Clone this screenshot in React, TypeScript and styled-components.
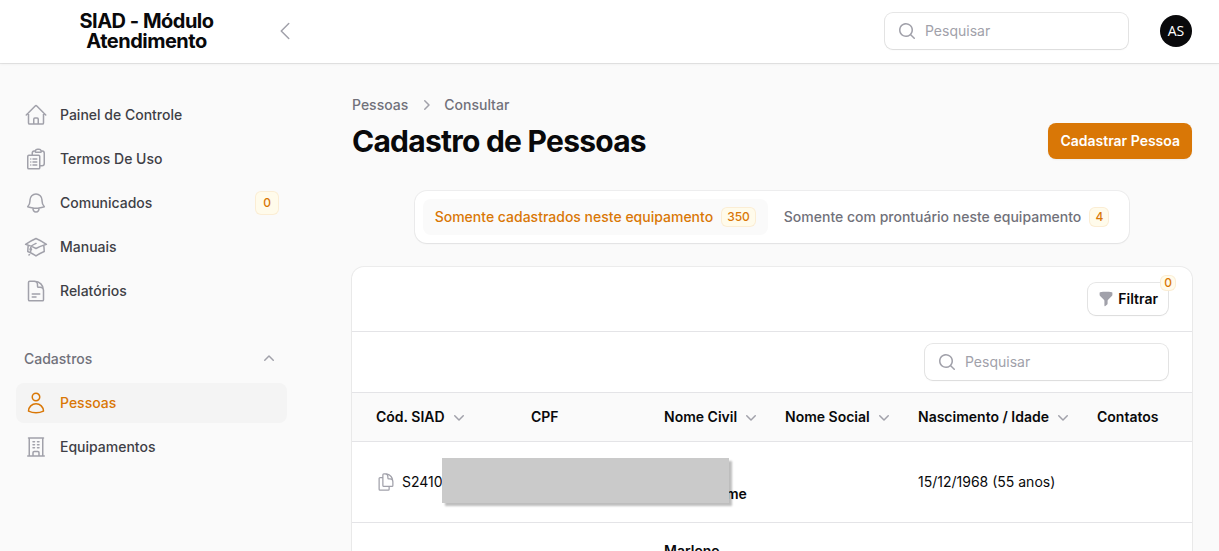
import React from "react";
import styled, { createGlobalStyle } from "styled-components";
import {
  HiMiniChevronDown,
  HiMiniChevronRight,
  HiMiniChevronUp,
  HiMiniFunnel,
  HiMiniMagnifyingGlass,
  HiOutlineAcademicCap,
  HiOutlineBell,
  HiOutlineBuildingOffice,
  HiOutlineChevronLeft,
  HiOutlineClipboardDocumentList,
  HiOutlineDocumentDuplicate,
  HiOutlineDocumentText,
  HiOutlineHome,
  HiOutlineUser,
} from "react-icons/hi2";
import type { IconType } from "react-icons";

const color = {
  text: "#09090b",
  body: "#3f3f46",
  muted: "#71717a",
  icon: "#a1a1aa",
  primary: "#d97706",
  primarySoft: "#fffbeb",
  page: "#fafafa",
  line: "#e4e4e7",
};

const GlobalStyle = createGlobalStyle`
  *, *::before, *::after { box-sizing: border-box; }
  html { scrollbar-width: none; }
  body {
    margin: 0;
    background: ${color.page};
    color: ${color.text};
    font-family: Inter, "Liberation Sans", sans-serif;
    font-size: 14px;
    line-height: 20px;
  }
  button, input { font: inherit; }
  button { border: 0; background: none; padding: 0; cursor: pointer; }
  a { text-decoration: none; color: inherit; }
  ul, ol { list-style: none; margin: 0; padding: 0; }
  svg { display: block; flex: none; }
`;

const Topbar = styled.header`
  display: flex;
  align-items: center;
  min-height: 63px;
  padding: 0 27px 1px 0;
  background: #fff;
  box-shadow: 0 0 0 1px rgba(9, 9, 11, 0.08), 0 1px 3px rgba(0, 0, 0, 0.06);
  position: relative;
`;

const BrandArea = styled.div`
  display: flex;
  align-items: center;
  gap: 4px;
  width: 297px;
  padding-left: 24px;
`;

const Brand = styled.a`
  flex: 1;
  padding: 0 48px;
  font-size: 20px;
  line-height: 20px;
  font-weight: 700;
  letter-spacing: -0.025em;
  text-align: center;
`;

const IconButton = styled.button`
  color: ${color.icon};
`;

const TopbarEnd = styled.div`
  display: flex;
  align-items: center;
  gap: 32px;
  margin-left: auto;
`;

const Avatar = styled.button`
  width: 32px;
  height: 32px;
  border-radius: 50%;
  background: ${color.text};
  color: #fff;
  font-family: "Open Sans", "Noto Sans", sans-serif;
  text-align: center;
`;

const SearchBox = styled.label`
  display: flex;
  align-items: center;
  gap: 8px;
  width: 243px;
  height: 36px;
  padding: 0 12px;
  border-radius: 8px;
  background: #fff;
  color: ${color.icon};
  box-shadow: 0 0 0 1px rgba(9, 9, 11, 0.1), 0 1px 2px rgba(0, 0, 0, 0.05);

  input {
    flex: 1;
    min-width: 0;
    padding: 0;
    border: 0;
    outline: 0;
    background: none;
    color: ${color.text};
  }
  input::placeholder { color: ${color.icon}; opacity: 1; }
`;

const Layout = styled.div`
  display: flex;
`;

const Sidebar = styled.nav`
  display: flex;
  flex: none;
  flex-direction: column;
  gap: 28px;
  width: 320px;
  padding: 32px 33px 32px 16px;
`;

const NavGroup = styled.section`
  display: flex;
  flex-direction: column;
  gap: 4px;
`;

const NavList = styled.ul`
  display: flex;
  flex-direction: column;
  gap: 4px;
`;

const NavLink = styled.a<{ $active?: boolean }>`
  display: flex;
  align-items: center;
  gap: 12px;
  height: 40px;
  padding: 0 8px;
  border-radius: 8px;
  font-weight: 500;
  color: ${(p) => (p.$active ? color.primary : color.body)};
  background: ${(p) => (p.$active ? "#f4f4f4" : "transparent")};

  svg { color: ${(p) => (p.$active ? color.primary : color.icon)}; }
  span:first-of-type { flex: 1; }
`;

const GroupToggle = styled.button`
  display: flex;
  align-items: center;
  justify-content: space-between;
  height: 40px;
  padding: 0 8px;
  font-weight: 500;
  color: ${color.muted};

  svg { color: ${color.icon}; }
`;

const badgeSizes = { xs: 16, sm: 20, md: 24 };

const Badge = styled.span<{ $size: keyof typeof badgeSizes }>`
  display: inline-flex;
  align-items: center;
  justify-content: center;
  min-width: ${(p) => badgeSizes[p.$size]}px;
  height: ${(p) => badgeSizes[p.$size]}px;
  padding: 0 ${(p) => (p.$size === "xs" ? 2 : 6)}px;
  border-radius: 6px;
  background: ${color.primarySoft};
  box-shadow: inset 0 0 0 1px rgba(217, 119, 6, 0.1);
  color: ${color.primary};
  font-size: 12px;
  line-height: 16px;
  font-weight: 500;
`;

const Main = styled.main`
  flex: 1;
  min-width: 0;
  padding: 32px 27px 32px 32px;
`;

const PageHeader = styled.div`
  display: flex;
  align-items: flex-end;
  justify-content: space-between;
  margin-bottom: 32px;
`;

const Breadcrumbs = styled.ol`
  display: flex;
  gap: 8px;
  margin-bottom: 8px;
  font-weight: 500;
  color: ${color.muted};

  li { display: flex; gap: 8px; }
  svg { color: ${color.icon}; }
`;

const Title = styled.h1`
  margin: 0;
  font-size: 30px;
  line-height: 36px;
  font-weight: 700;
  letter-spacing: -0.025em;
`;

const PrimaryButton = styled.button`
  height: 36px;
  padding: 0 12px;
  border-radius: 8px;
  background: ${color.primary};
  box-shadow: 0 1px 2px rgba(0, 0, 0, 0.05);
  color: #fff;
  font-weight: 600;
`;

const Tabs = styled.div`
  display: flex;
  gap: 4px;
  width: fit-content;
  margin: 0 auto 24px;
  padding: 8px;
  border-radius: 12px;
  background: #fff;
  box-shadow: 0 0 0 1px rgba(9, 9, 11, 0.05), 0 1px 2px rgba(0, 0, 0, 0.05);
`;

const Tab = styled.button<{ $active?: boolean }>`
  display: flex;
  align-items: center;
  gap: 8px;
  height: 36px;
  padding: 0 12px;
  border-radius: 8px;
  font-weight: 500;
  color: ${(p) => (p.$active ? color.primary : color.muted)};
  background: ${(p) => (p.$active ? color.page : "transparent")};
`;

const Card = styled.section`
  overflow: hidden;
  border-radius: 12px;
  background: #fff;
  box-shadow: 0 0 0 1px rgba(9, 9, 11, 0.06), 0 1px 2px rgba(0, 0, 0, 0.05);
`;

const CardBar = styled.div<{ $pad: number }>`
  display: flex;
  justify-content: flex-end;
  padding: ${(p) => p.$pad}px 24px;
  border-bottom: 1px solid ${color.line};
`;

const FilterButton = styled.button`
  position: relative;
  display: flex;
  align-items: center;
  gap: 4px;
  height: 32px;
  padding: 0 10px;
  border-radius: 8px;
  background: #fff;
  box-shadow: 0 0 0 1px rgba(9, 9, 11, 0.1), 0 1px 2px rgba(0, 0, 0, 0.05);
  color: ${color.text};
  font-weight: 600;

  svg { color: ${color.icon}; }
`;

const FilterCount = styled.span`
  position: absolute;
  top: -8px;
  right: -8px;
  display: flex;
`;

const Table = styled.table`
  width: 100%;
  table-layout: fixed;
  border-collapse: separate;
  border-spacing: 0;
`;

const Th = styled.th`
  height: 49px;
  padding: 0 12px;
  border-bottom: 1px solid ${color.line};
  background: ${color.page};
  font-weight: 600;
  text-align: left;
  white-space: nowrap;

  &:first-child { padding-left: 24px; }
`;

const SortButton = styled.button`
  display: flex;
  align-items: center;
  gap: 4px;
  color: ${color.text};
  font-weight: 600;

  svg { color: ${color.icon}; }
`;

const Td = styled.td`
  position: relative;
  padding: 16px 12px;
  border-bottom: 1px solid ${color.line};
  line-height: 24px;
  white-space: nowrap;

  &:first-child { padding-left: 24px; }
`;

const CodeCell = styled.div`
  display: flex;
  align-items: center;
  gap: 6px;
`;

const PersonName = styled.div<{ $hidden?: boolean }>`
  min-height: 48px;
  padding-top: ${(p) => (p.$hidden ? 24 : 0)}px;
  padding-left: ${(p) => (p.$hidden ? 62 : 0)}px;
  font-weight: 600;
`;

/* Grey plate that hides personal data across the first columns */
const Redaction = styled.div`
  position: absolute;
  z-index: 1;
  top: 16px;
  left: 90px;
  width: 287px;
  height: 45px;
  background: #cacaca;
  box-shadow: 3px 3px 2px rgba(0, 0, 0, 0.26);
`;

interface NavEntry {
  label: string;
  icon: IconType;
  badge?: number;
  active?: boolean;
}

const mainNav: NavEntry[] = [
  { label: "Painel de Controle", icon: HiOutlineHome },
  { label: "Termos De Uso", icon: HiOutlineClipboardDocumentList },
  { label: "Comunicados", icon: HiOutlineBell, badge: 0 },
  { label: "Manuais", icon: HiOutlineAcademicCap },
  { label: "Relatórios", icon: HiOutlineDocumentText },
];

const recordsNav: NavEntry[] = [
  { label: "Pessoas", icon: HiOutlineUser, active: true },
  { label: "Equipamentos", icon: HiOutlineBuildingOffice },
];

const columns = [
  { label: "Cód. SIAD", sortable: true, width: 167 },
  { label: "CPF", width: 133 },
  { label: "Nome Civil", sortable: true, width: 121 },
  { label: "Nome Social", sortable: true, width: 133 },
  { label: "Nascimento / Idade", sortable: true, width: 179 },
  { label: "Contatos" },
];

const Col = styled.col<{ $width?: number }>`
  width: ${(p) => (p.$width ? `${p.$width}px` : "auto")};
`;

function NavItems({ items }: { items: NavEntry[] }) {
  return (
    <NavList>
      {items.map(({ label, icon: Icon, badge, active }) => (
        <li key={label}>
          <NavLink href="#" $active={active} aria-current={active ? "page" : undefined}>
            <Icon size={24} />
            <span>{label}</span>
            {badge !== undefined && <Badge $size="md">{badge}</Badge>}
          </NavLink>
        </li>
      ))}
    </NavList>
  );
}

function Search() {
  return (
    <SearchBox>
      <HiMiniMagnifyingGlass size={20} />
      <input type="search" placeholder="Pesquisar" aria-label="Pesquisar" />
    </SearchBox>
  );
}

export default function App() {
  return (
    <>
      <GlobalStyle />
      <Topbar>
        <BrandArea>
          <Brand href="#">SIAD - Módulo Atendimento</Brand>
          <IconButton aria-label="Recolher menu">
            <HiOutlineChevronLeft size={24} />
          </IconButton>
        </BrandArea>
        <TopbarEnd>
          <Search />
          <Avatar aria-label="Conta">AS</Avatar>
        </TopbarEnd>
      </Topbar>

      <Layout>
        <Sidebar>
          <NavItems items={mainNav} />
          <NavGroup>
            <GroupToggle aria-expanded>
              Cadastros
              <HiMiniChevronUp size={20} />
            </GroupToggle>
            <NavItems items={recordsNav} />
          </NavGroup>
        </Sidebar>

        <Main>
          <PageHeader>
            <div>
              <Breadcrumbs>
                <li>
                  <a href="#">Pessoas</a>
                </li>
                <li>
                  <HiMiniChevronRight size={20} />
                  <a href="#">Consultar</a>
                </li>
              </Breadcrumbs>
              <Title>Cadastro de Pessoas</Title>
            </div>
            <PrimaryButton>Cadastrar Pessoa</PrimaryButton>
          </PageHeader>

          <Tabs role="tablist">
            <Tab role="tab" aria-selected $active>
              Somente cadastrados neste equipamento
              <Badge $size="sm">350</Badge>
            </Tab>
            <Tab role="tab" aria-selected={false}>
              Somente com prontuário neste equipamento
              <Badge $size="sm">4</Badge>
            </Tab>
          </Tabs>

          <Card>
            <CardBar $pad={16}>
              <FilterButton>
                <HiMiniFunnel size={16} />
                Filtrar
                <FilterCount>
                  <Badge $size="xs">0</Badge>
                </FilterCount>
              </FilterButton>
            </CardBar>
            <CardBar $pad={12}>
              <Search />
            </CardBar>
            <Table>
              <colgroup>
                {columns.map((c) => (
                  <Col key={c.label} $width={c.width} />
                ))}
              </colgroup>
              <thead>
                <tr>
                  {columns.map((c) => (
                    <Th key={c.label} scope="col">
                      {c.sortable ? (
                        <SortButton>
                          {c.label}
                          <HiMiniChevronDown size={20} />
                        </SortButton>
                      ) : (
                        c.label
                      )}
                    </Th>
                  ))}
                </tr>
              </thead>
              <tbody>
                <tr>
                  <Td>
                    <CodeCell>
                      <IconButton aria-label="Copiar código">
                        <HiOutlineDocumentDuplicate size={20} />
                      </IconButton>
                      S2410
                    </CodeCell>
                    <Redaction />
                  </Td>
                  <Td />
                  <Td>
                    <PersonName $hidden>me</PersonName>
                  </Td>
                  <Td />
                  <Td>15/12/1968 (55 anos)</Td>
                  <Td />
                </tr>
                <tr>
                  <Td />
                  <Td />
                  <Td>
                    <PersonName>Marlene</PersonName>
                  </Td>
                  <Td />
                  <Td />
                  <Td />
                </tr>
              </tbody>
            </Table>
          </Card>
        </Main>
      </Layout>
    </>
  );
}
